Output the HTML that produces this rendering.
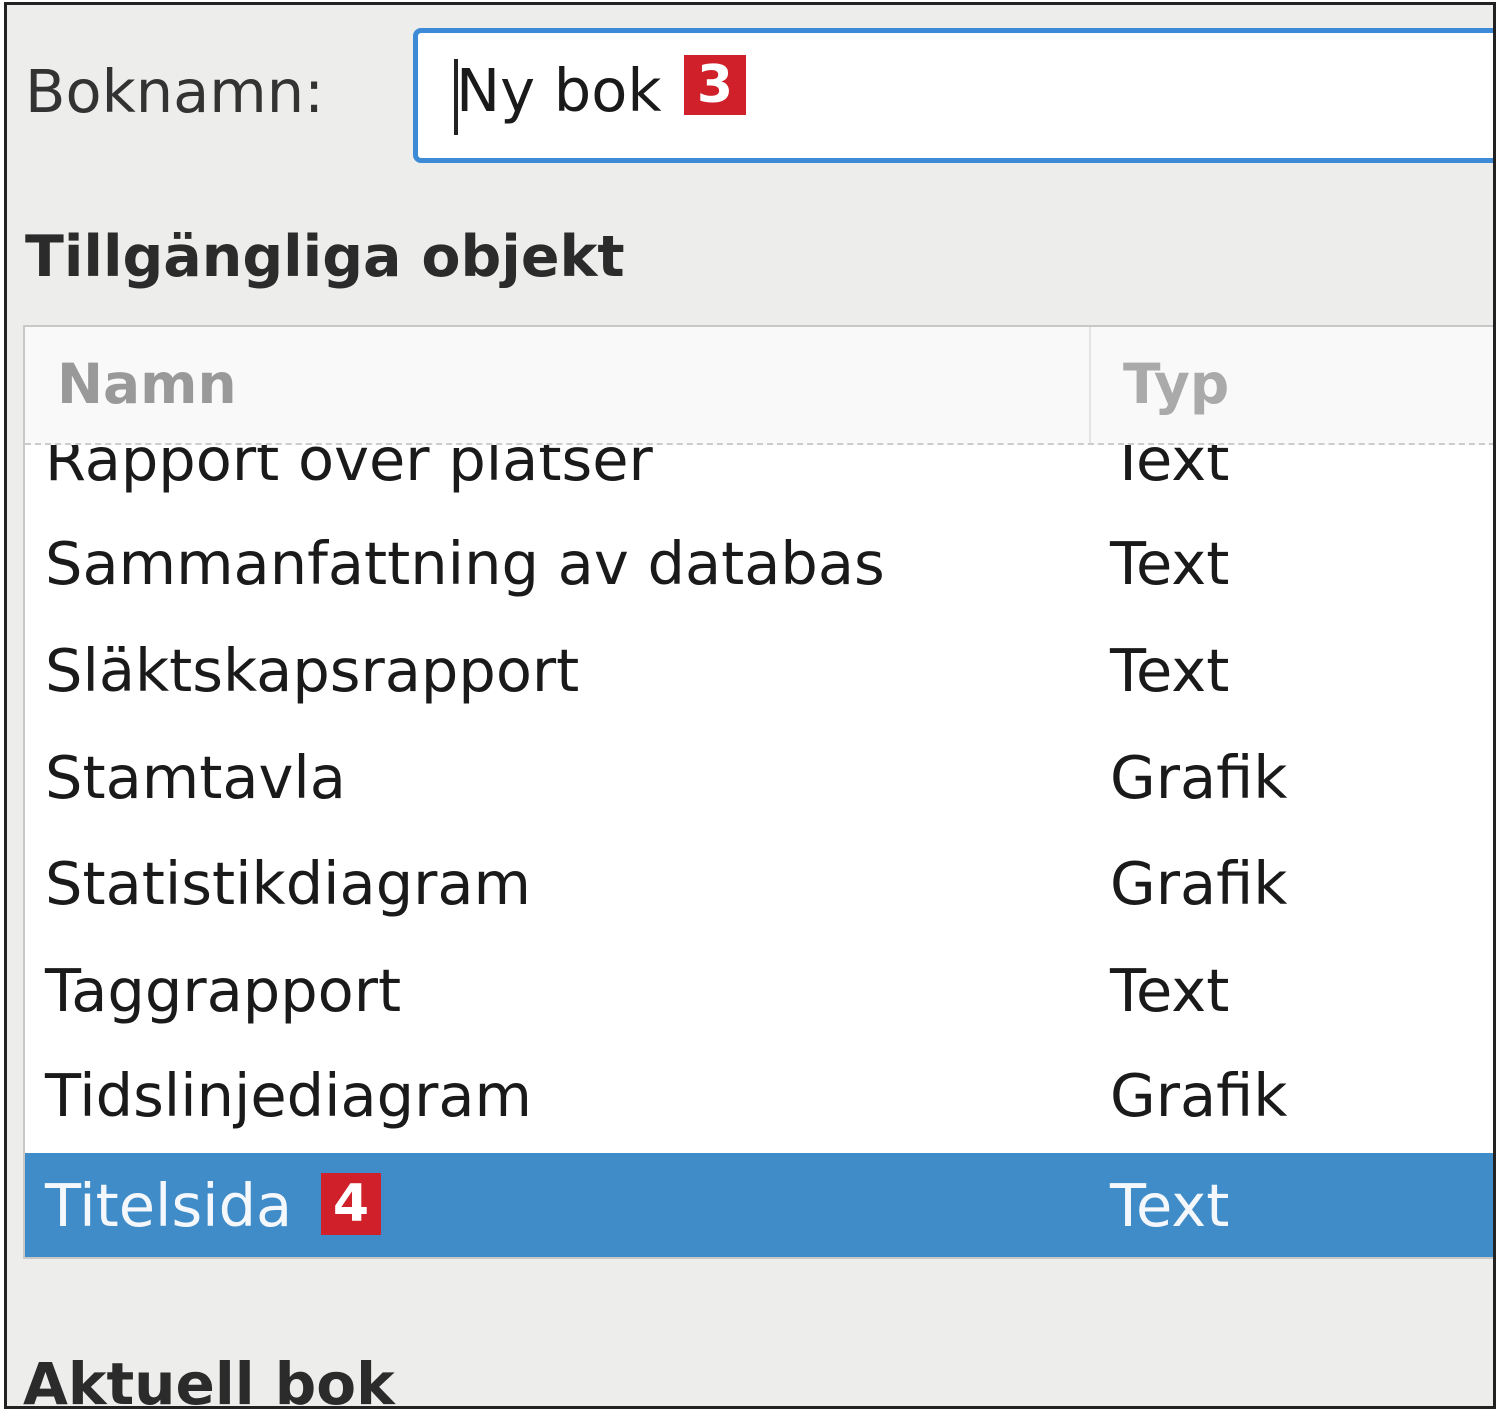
<!DOCTYPE html>
<html><head><meta charset="utf-8"><style>
body{margin:0;width:1500px;height:1411px;background:#fff;overflow:hidden;font-family:"DejaVu Sans","Liberation Sans",sans-serif;}
#f{position:absolute;left:4px;top:2px;width:1486px;height:1401px;border:3px solid #222;background:#ededeb;overflow:hidden}
.a{position:absolute;white-space:nowrap;line-height:1}
#entry{position:absolute;left:406px;top:23px;width:1100px;height:125px;border:5px solid #3d8ad6;border-radius:8px;background:#fff}
.badge{position:absolute;background:#d0202a;color:#fff;font-weight:bold;text-align:center}
#tbl{position:absolute;left:16px;top:320px;width:1480px;height:930px;border:2px solid #c8c8c8;background:#fff;overflow:hidden}
.r{position:absolute;left:0;width:1480px;height:107px;font-size:59px;color:#1a1a1a}
.r span{position:absolute;top:6px}
.n{left:20px}.t{left:1085px}
</style></head><body>
<div id="f">
<div class="a" style="left:18px;top:57px;font-size:59px;color:#333">Boknamn:</div>
<div id="entry">
<div style="position:absolute;left:36px;top:26px;width:4px;height:76px;background:#222"></div>
<div class="a" style="left:38px;top:28px;font-size:59px;color:#1a1a1a">Ny bok</div>
<div class="badge" style="left:266px;top:22px;width:62px;height:60px;font-size:52px;line-height:60px">3</div>
</div>
<div class="a" style="left:18px;top:224px;font-size:57px;font-weight:bold;color:#2b2b2b">Tillgängliga objekt</div>
<div id="tbl">
<div class="r" style="top:92px"><span class="n">Rapport över platser</span><span class="t">Text</span></div>
<div style="position:absolute;left:0;top:0;width:1480px;height:116px;background:#f9f9f9;border-bottom:2px dashed #ccc"></div>
<div style="position:absolute;left:1064px;top:0;width:2px;height:116px;background:#e4e4e4"></div>
<div class="a" style="left:32px;top:30px;font-size:55px;font-weight:bold;color:#999">Namn</div>
<div class="a" style="left:1098px;top:30px;font-size:55px;font-weight:bold;color:#aaa">Typ</div>
<div class="r" style="top:196px"><span class="n">Sammanfattning av databas</span><span class="t">Text</span></div>
<div class="r" style="top:303px"><span class="n">Släktskapsrapport</span><span class="t">Text</span></div>
<div class="r" style="top:410px"><span class="n">Stamtavla</span><span class="t">Grafik</span></div>
<div class="r" style="top:516px"><span class="n">Statistikdiagram</span><span class="t">Grafik</span></div>
<div class="r" style="top:623px"><span class="n">Taggrapport</span><span class="t">Text</span></div>
<div class="r" style="top:728px"><span class="n">Tidslinjediagram</span><span class="t">Grafik</span></div>
<div class="r" style="top:826px;background:#3f8cc8;color:#f4f8fc"><span class="n" style="top:18px">Titelsida</span><span class="t" style="top:18px">Text</span>
<div class="badge" style="left:296px;top:20px;width:60px;height:62px;font-size:52px;line-height:62px">4</div></div>
</div>
<div class="a" style="left:16px;top:1350px;font-size:58px;font-weight:bold;color:#2b2b2b">Aktuell bok</div>
</div>
</body></html>
